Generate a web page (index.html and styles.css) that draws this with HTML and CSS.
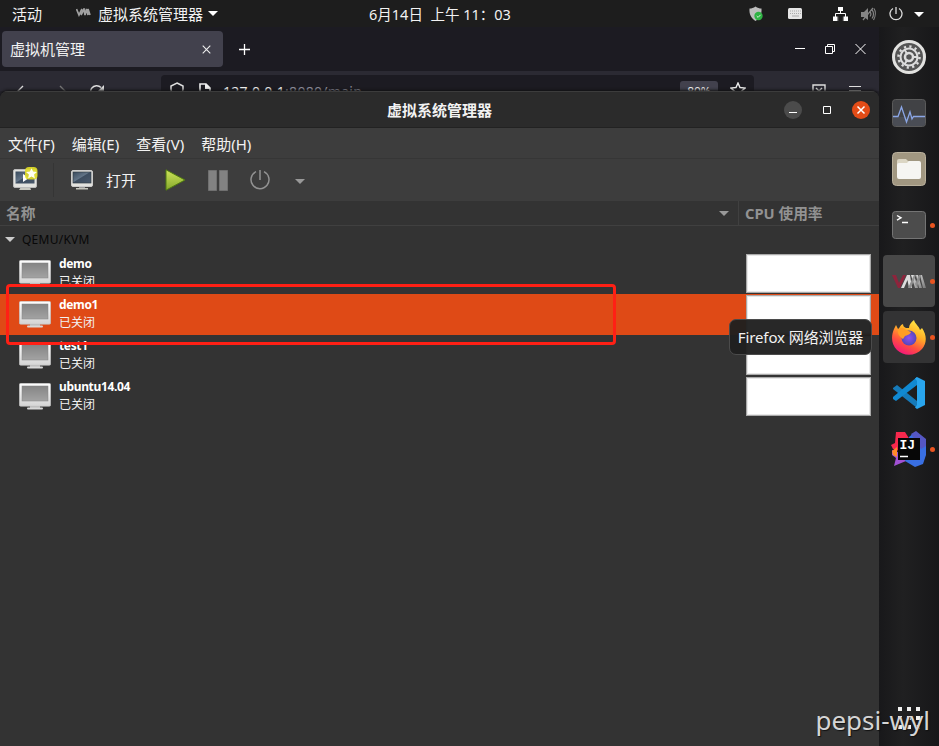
FILE: index.html
```html
<!DOCTYPE html>
<html lang="zh-CN">
<head>
<meta charset="utf-8">
<title>虚拟系统管理器</title>
<link rel="stylesheet" href="styles.css">
</head>
<body>
<svg class="defs" width="0" height="0" aria-hidden="true">
  <defs>
    <linearGradient id="frame" x2="0" y2="1"><stop stop-color="#fff"/><stop offset="1" stop-color="#d4d4d4"/></linearGradient>
    <linearGradient id="glass" x2="0" y2="1"><stop stop-color="#858585"/><stop offset="1" stop-color="#a3a3a3"/></linearGradient>
    <linearGradient id="blueglass" x2="1" y2="1"><stop stop-color="#38495b"/><stop offset=".45" stop-color="#627487"/><stop offset=".5" stop-color="#3d4d60"/><stop offset="1" stop-color="#4a596b"/></linearGradient>
    <linearGradient id="green" x2="0" y2="1"><stop stop-color="#cde35a"/><stop offset="1" stop-color="#86a92c"/></linearGradient>
    <linearGradient id="fire" x1=".8" y1="0" x2=".3" y2="1"><stop stop-color="#fff14a"/><stop offset=".4" stop-color="#ffad26"/><stop offset=".7" stop-color="#ff503f"/><stop offset="1" stop-color="#f3137e"/></linearGradient>
    <radialGradient id="globe"><stop stop-color="#8c50f2"/><stop offset="1" stop-color="#5547b8"/></radialGradient>
    <linearGradient id="metal" x2="1" y2="1"><stop stop-color="#e6e6e6"/><stop offset="1" stop-color="#777"/></linearGradient>
    <symbol id="monitor" viewBox="0 0 32 27">
      <path d="M11 23h10v2H11z" fill="#bbb"/><rect x="8" y="24.600" width="16" height="2" rx="1" fill="#d8d8d8"/>
      <rect x=".3" y=".3" width="31.400" height="23" rx="1.500" fill="url(#frame)" stroke="#bcbcbc" stroke-width=".6"/>
      <rect x="3" y="3" width="26" height="15" fill="url(#glass)" stroke="#858585" stroke-width=".5"/>
    </symbol>
    <symbol id="vm" viewBox="0 0 36 15">
      <path d="M1 1h4l3 8 4-8h3L9 14H7z" fill="#8e243c"/>
      <path d="M10 14L16 1h3l2 13h-3l-1.500-8L13 14z" fill="#ddd"/>
      <path d="M20 1h3l4 13h-3zM25 1h2l4 13h-3zM29 1h2l4 13h-3z" fill="url(#metal)"/>
      <path d="M17 14L23 1h2l-5 13zM24 10l4-9h2l-4 12z" fill="#8f8f8f"/>
    </symbol>
  </defs>
</svg>
<div class="desktop">
  <header class="topbar">
    <span class="activities">活动</span>
    <svg class="vmmini" width="15" height="9" viewBox="0 0 15 9"><path d="M.5 1l2.500 6 3-6M5 7l3-6 1 6 1.500-6L12 7V1l2 6" fill="none" stroke="#a0a0a0" stroke-width="1.700"/></svg>
    <span class="appname">虚拟系统管理器</span>
    <i class="caret white"></i>
    <span class="clock">6月14日&nbsp; 上午 11<span class="colon">：</span>03</span>
    <span class="tray">
      <svg width="15" height="16" viewBox="0 0 15 16"><path d="M6.500.5C8.500 2 10.500 2.500 12.500 2.500c.5 6-2 10-6 12.500C2.500 12.500 0 8.500.5 2.500 2.500 2.500 4.500 2 6.500.5z" fill="#bdbdbd"/><circle cx="9.500" cy="10" r="4.200" fill="#2fb344"/><path d="M7.700 10l1.400 1.400 2.500-2.600" stroke="#d6f5db" fill="none"/></svg>
      <svg width="15" height="11" viewBox="0 0 15 11"><rect width="14" height="11" rx="1.500" fill="#e6e6e6"/><path d="M2 3h11M2 5.500h11" stroke="#aaa" stroke-dasharray="1 1"/><path d="M4 8h7" stroke="#aaa"/></svg>
      <svg width="15" height="14" viewBox="0 0 15 14"><path d="M5 0h5v4H5zM0 9.500h4.500V14H0zM5.300 9.500h4.500V14H5.300zM10.500 9.500H15V14h-4.500z" fill="#fff"/><path d="M7.500 3v4M2.500 10V6.500h10V10" fill="none" stroke="#fff"/><path d="M5.200 9h4.700v5H5.200z" fill="#1d1d1d"/></svg>
      <svg width="15" height="14" viewBox="0 0 15 14"><path d="M0 5h3l4-4v12L3 10H0z" fill="#858585"/><path d="M9 5c1 1 1 3 0 4.500M11 3c2 2 2 6 0 8.500M13 1.500c2 3 1.500 8-.5 11.500M2 13L12 1" fill="none" stroke="#858585" stroke-width="1.200"/></svg>
      <svg width="14" height="14" viewBox="0 0 14 14"><path d="M4 1.500a6 6 0 1 0 6 0M7 0v7" fill="none" stroke="#ddd" stroke-width="1.300"/></svg>
      <i class="caret white"></i>
    </span>
  </header>
  <div class="workspace">
    <main class="windows">
      <section class="browser">
        <div class="tabs">
          <div class="tab"><span>虚拟机管理</span><svg width="9" height="9" viewBox="0 0 9 9"><path d="M.7.7l7.600 7.600M8.300.7L.7 8.300" stroke="#eee" stroke-width="1.100"/></svg></div>
          <svg class="plus" width="13" height="13" viewBox="0 0 13 13"><path d="M6.500 1v11M1 6.500h11" stroke="#fff" stroke-width="1.300"/></svg>
          <div class="wctl">
            <svg width="10" height="10" viewBox="0 0 10 10"><path d="M0 4.500h10" stroke="#fff"/></svg>
            <svg width="10" height="10" viewBox="0 0 10 10"><path d="M.5 2.500h7v7h-7zM2.500 2.500v-2h7v7h-2" fill="none" stroke="#fff"/></svg>
            <svg width="11" height="10" viewBox="0 0 11 10"><path d="M.5 0l10 10M10.500 0l-10 10" stroke="#fff"/></svg>
          </div>
        </div>
        <div class="navbar">
          <div class="navicons">
            <svg width="16" height="16" viewBox="0 0 16 16"><path d="M9 2L3 8l6 6M3 8h12" fill="none" stroke="#ddd" stroke-width="1.400"/></svg>
            <svg width="16" height="16" viewBox="0 0 16 16"><path d="M8 2l6 6-6 6M14 8H2" fill="none" stroke="#777" stroke-width="1.400"/></svg>
            <svg width="16" height="16" viewBox="0 0 16 16"><path d="M12.500 9A6 6 0 1 1 11 3.500" fill="none" stroke="#ddd" stroke-width="1.500"/><path d="M14 1v6H8z" fill="#ddd"/></svg>
          </div>
          <div class="urlbar">
            <svg width="14" height="16" viewBox="0 0 14 16"><path d="M7 1l6 3V7c0 4-3 6-6 8-3-2-6-4-6-8V4z" fill="none" stroke="#ddd" stroke-width="1.500"/></svg>
            <svg class="page" width="12" height="15" viewBox="0 0 12 15"><path d="M1 1h6l4 4v9H1z" fill="none" stroke="#eee" stroke-width="1.600"/><path d="M6 1h1l4 4v1H6z" fill="#eee"/></svg>
            <span class="url">127.0.0.1<b>:8080/main</b></span>
            <span class="pct">80%</span>
            <svg class="fav" width="16" height="16" viewBox="0 0 16 16"><path d="M8 1l2 4.500 5 .6-3.700 3.300 1 5L8 12l-4.300 2.400 1-5L1 6.100l5-.6z" fill="none" stroke="#eee" stroke-width="1.400"/></svg>
          </div>
          <svg class="pocket" width="14" height="14" viewBox="0 0 14 14"><path d="M1 1h12v6c0 4-3 6-6 6s-6-2-6-6zM4 4l3 3 3-3" fill="none" stroke="#ddd" stroke-width="1.400"/></svg>
          <svg class="burger" width="12" height="12" viewBox="0 0 12 12"><path d="M0 1.500h12M0 5.500h12M0 9.500h12" stroke="#ddd" stroke-width="1.200"/></svg>
        </div>
      </section>
      <section class="manager">
        <div class="titlebar">
          <h1>虚拟系统管理器</h1>
          <div class="buttons">
            <svg width="18" height="18" viewBox="0 0 18 18"><circle cx="9" cy="9" r="9" fill="#4b4b4b"/><path d="M5 11.500h8" stroke="#fff"/></svg>
            <svg width="18" height="18" viewBox="0 0 18 18"><path d="M5.500 5.500h7v7h-7z" fill="none" stroke="#fff"/></svg>
            <svg width="18" height="18" viewBox="0 0 18 18"><circle cx="9" cy="9" r="9" fill="#e34c17"/><path d="M5.500 5.500l7 7M12.500 5.500l-7 7" stroke="#fff" stroke-width="1.500"/></svg>
          </div>
        </div>
        <nav class="menubar"><span>文件(F)</span><span>编辑(E)</span><span>查看(V)</span><span>帮助(H)</span></nav>
        <div class="toolbar">
          <div class="new"><svg width="26" height="24" viewBox="0 0 26 24"><path d="M8 20h9l1 3H6z" fill="#c8c8c0"/><rect x=".5" y="2.500" width="23" height="18" rx="1.500" fill="#e3e3df" stroke="#bbb"/><rect x="2.500" y="4.500" width="19" height="12" fill="url(#blueglass)"/><path d="M10 7v8l6-4z" fill="#fff"/><rect x="12" y="0" width="12.500" height="12.500" rx="4" fill="#dfdc28" opacity=".92"/><path d="M18.500 1.200l1.600 3.400 3.800.4-2.800 2.600.8 3.800-3.400-1.900-3.400 1.900.8-3.800L13 5l3.900-.4z" fill="#fffff0"/></svg></div>
          <div class="open"><svg width="22" height="20" viewBox="0 0 22 20"><path d="M8 16h6v2H8z" fill="#999"/><path d="M5 18h12v1.500H5z" fill="#c5c5bd"/><rect x=".5" y=".5" width="21" height="16" rx="1.500" fill="#e3e3df" stroke="#ccc"/><rect x="2" y="2" width="18" height="11" fill="url(#blueglass)" stroke="#333c45" stroke-width=".7"/></svg><span>打开</span></div>
          <svg class="play" width="21" height="22" viewBox="0 0 21 22"><path d="M1 .8L20 11 1 21.200z" fill="url(#green)" stroke="#4e7a10"/></svg>
          <svg class="pause" width="20" height="21" viewBox="0 0 20 21"><path d="M.5.5h8v20h-8zM11.500.5h8v20h-8z" fill="#828282" stroke="#707070"/></svg>
          <svg class="power" width="20" height="20" viewBox="0 0 20 20"><path d="M6 1.600a9 9 0 1 0 8 0M10 0v10" fill="none" stroke="#929292" stroke-width="1.500"/></svg>
          <i class="caret gray"></i>
        </div>
        <div class="listhead"><div class="hname"><span>名称</span><i class="caret gray"></i></div><div class="hcpu">CPU 使用率</div></div>
        <div class="list">
          <div class="conn"><i class="caret light"></i><span>QEMU/KVM</span></div>
          <div class="row"><svg class="mon"><use href="#monitor"/></svg><div class="info"><strong>demo</strong><span>已关闭</span></div><div class="graph"></div></div>
          <div class="row selected"><svg class="mon"><use href="#monitor"/></svg><div class="info"><strong>demo1</strong><span>已关闭</span></div><div class="graph"></div></div>
          <div class="row"><svg class="mon"><use href="#monitor"/></svg><div class="info"><strong>test1</strong><span>已关闭</span></div><div class="graph"></div></div>
          <div class="row"><svg class="mon"><use href="#monitor"/></svg><div class="info"><strong>ubuntu14.04</strong><span>已关闭</span></div><div class="graph"></div></div>
          <div class="highlight"></div>
        </div>
      </section>
    </main>
    <aside class="dock">
      <div class="slot"><svg width="34" height="34" viewBox="0 0 34 34"><circle cx="17" cy="17" r="15.500" fill="#555" stroke="#e2e2e0" stroke-width="3"/><circle cx="17" cy="17" r="10.500" fill="none" stroke="#ddd" stroke-width="2.500" stroke-dasharray="2.200 3.300"/><circle cx="17" cy="17" r="8.500" fill="none" stroke="#ddd" stroke-width="2"/><circle cx="17" cy="17" r="4" fill="none" stroke="#ddd" stroke-width="2.500"/><path d="M20 17h6M15.500 14.500L12.500 9.500M15.500 19.500l-3 5" stroke="#ddd" stroke-width="2"/></svg></div>
      <div class="slot"><svg width="34" height="28" viewBox="0 0 34 28"><rect x=".5" y=".5" width="33" height="27" rx="3" fill="#414245" stroke="#5a5a5a"/><path d="M1 18h32v6a3 3 0 0 1-3 3H4a3 3 0 0 1-3-3z" fill="#4a4d55"/><path d="M1 17.500h5L9.500 8l5 15L18 13l2 7 1.500-2.500H33" fill="none" stroke="#8ba6e6" stroke-width="1.300"/></svg></div>
      <div class="slot"><svg width="34" height="34" viewBox="0 0 34 34"><rect x=".5" y=".5" width="33" height="33" rx="4" fill="#a19781" stroke="#b9b09c"/><path d="M5 9q0-2 2-2h7l2 2h10q2 0 2 2v5H5z" fill="#dcd6c4"/><path d="M5 13q0-2 2-2h8l2-2h10q2 0 2 2v14q0 2-2 2H7q-2 0-2-2z" fill="#f6f5f2"/></svg></div>
      <div class="slot run"><svg width="34" height="28" viewBox="0 0 34 28"><rect x=".5" y=".5" width="33" height="27" rx="3" fill="#4c4c4c" stroke="#747474"/><path d="M5 4.500l4 2.300-4 2.300M10 11.500h6" fill="none" stroke="#fff" stroke-width="1.400"/></svg></div>
      <div class="slot run active"><svg width="36" height="15"><use href="#vm"/></svg></div>
      <div class="slot run hover"><svg width="34" height="35" viewBox="0 0 34 35"><path d="M22 0c1 4 5 6 6 10l2-2c5 7 5 15 0 21-6 7-18 8-25 1C-1 24-1 16 2 9l2-4 2 4c2-1 2-4 5-5 0 2 1 3 3 4h3c0-3 2-6 5-8z" fill="url(#fire)"/><circle cx="17" cy="18" r="7.500" fill="url(#globe)"/><path d="M6 10c3-3 6-2 8 0l5 2c-1 3-4 3-6 4l-2 3c-3-2-6-5-5-9z" fill="#ff9d25"/></svg>
        <div class="tooltip">Firefox 网络浏览器</div></div>
      <div class="slot"><svg width="32" height="32" viewBox="0 0 32 32"><path d="M0 11l4-3 20 16v7L0 12z" fill="#167ab9"/><path d="M0 20v2l3 2L24 8V0z" fill="#1089d2"/><path d="M24 0l8 4v24l-8 4-2-1.500 2-2.500V4l-2-2.500z" fill="#29a5ed"/></svg></div>
      <div class="slot run"><svg width="36" height="36" viewBox="0 0 36 36"><path d="M5 1h9l5 8-4 13-13-4L0 14l4-2z" fill="#f7284d"/><path d="M1 19l8 3 6 8-12 5 2-8-4-3z" fill="#a151d4"/><path d="M1 20l5-4v10l-4-2z" fill="#ff8b27"/><path d="M18 6l6-5 11 8v15l-3 9-8 3-10-6z" fill="#396fe2"/><path d="M20 3l5-3 10 8v7l-5 3z" fill="#5557c4"/><rect x="7" y="7" width="22" height="22" fill="#070707"/><text x="8.500" y="18" class="ij">IJ</text><path d="M9 25.500h8" stroke="#fff" stroke-width="1.500"/></svg></div>
      <div class="apps"><svg width="24" height="24" viewBox="0 0 24 24"><path d="M1 1h4v4H1zM10 1h4v4h-4zM19 1h4v4h-4zM1 10h4v4H1zM10 10h4v4h-4zM19 10h4v4h-4zM1 19h4v4H1zM10 19h4v4h-4zM19 19h4v4h-4z" fill="#f2f2f2"/></svg><span class="watermark">pepsi-wyl</span></div>
    </aside>
  </div>
</div>
</body>
</html>
```
FILE: styles.css
```css
* { box-sizing: border-box; }
body { margin: 0; background: #1c1c1c; color: #f2f2f2; font: 15px/20px "Noto Sans", "Noto Sans CJK SC", sans-serif; }
svg { display: block; flex: none; }
.defs { position: absolute; }
.desktop { width: 939px; height: 746px; overflow: hidden; display: flex; flex-direction: column; }
.caret { flex: none; width: 0; height: 0; border: 5px solid transparent; border-top-color: #fff; border-bottom: 0; }
.caret.gray { border-top-color: #999; }
.caret.light { border-top-color: #ccc; }

.topbar { height: 27px; flex: none; display: flex; align-items: center; background: #1d1d1d; padding: 0 15px 0 12px; white-space: pre; }
.topbar .caret { margin-left: 5px; }
.vmmini { margin: -2px 7px 0 34px; }
.clock { margin-left: 151px; font-size: 14.5px; }
.colon { font-family: "Noto Sans CJK TC", sans-serif; line-height: 1; }
.tray { margin-left: auto; display: flex; align-items: center; }
.tray svg { margin-right: -1px; position: relative; left: 0; }
.tray svg:nth-child(2) { margin-left: 25px; }
.tray svg:nth-child(3) { margin-left: 31px; }
.tray svg:nth-child(4) { margin-left: 14px; }
.tray svg:nth-child(5) { margin-left: 14px; }
.tray .caret { margin: 1px 0 0 12px; }

.workspace { flex: 1; display: flex; min-height: 0; }
.windows { width: 879px; display: flex; flex-direction: column; background: #24232b; }

.browser { height: 64px; flex: none; overflow: hidden; background: #2b2a33; }
.tabs { height: 44px; background: #1c1b22; display: flex; align-items: center; padding: 0 13px 0 2px; }
.tab { width: 221px; height: 36px; border-radius: 4px; background: #42414d; display: flex; align-items: center; justify-content: space-between; padding: 0 12px 0 8px; }
.plus { margin-left: 15px; }
.wctl { margin-left: auto; display: flex; gap: 20px; }
.navbar { display: flex; padding-top: 4px; height: 44px; }
.navicons { display: flex; gap: 22px; width: 161px; padding: 9px 0 0 14px; }
.urlbar { width: 593px; height: 32px; border-radius: 4px; background: #1c1b22; display: flex; align-items: flex-start; padding: 7px 8px 0 9px; }
.page { margin: 1px 0 0 15px; }
.url { margin-left: 12px; font-size: 14px; letter-spacing: .3px; }
.url b { font-weight: 400; color: #8f8f9d; }
.pct { margin: -1px 12px 0 auto; width: 38px; height: 20px; border-radius: 3px; background: #42414d; text-align: center; font-size: 12px; line-height: 21px; }
.pocket { margin: 9px 0 0 58px; }
.burger { margin: 10px 0 0 23px; }

.manager { flex: 1; display: flex; flex-direction: column; background: #333; border-radius: 8px 8px 0 0; box-shadow: 0 -1px 3px #111; overflow: hidden; }
.titlebar { height: 37px; flex: none; background: #2b2b2b; border-top: 1px solid #3c3c3c; border-bottom: 1px solid #222; display: grid; grid-template-columns: 1fr auto 1fr; align-items: center; }
.titlebar h1 { grid-column: 2; margin: 1px 0 0; font-size: 15px; line-height: 20px; }
.buttons { justify-self: end; display: flex; gap: 16px; padding-right: 9px; }
.menubar { height: 31px; flex: none; background: #3d3d3d; border-bottom: 1px solid #363636; display: flex; gap: 17px; align-items: center; padding: 1px 8px 0; font-size: 15px; }
.toolbar { height: 42px; flex: none; background: #3d3d3d; display: flex; align-items: center; }
.new { width: 54px; height: 34px; padding: 4px 0 0 13px; border-right: 1px solid #353535; }
.open { display: flex; align-items: center; margin-left: 17px; }
.open span { margin: 0 0 0 13px; }
.play { margin-left: 29px; }
.pause { margin-left: 22px; }
.power { margin-left: 22px; margin-top: -1px; }
.toolbar .caret { margin-left: 25px; margin-top: 2px; }
.listhead { height: 25px; flex: none; border-bottom: 1px solid #404040; display: flex; font-weight: 700; color: #929292; line-height: 25px; font-size: 14.7px; }
.hname { width: 739px; border-right: 1px solid #404040; padding: 0 9px 0 6px; display: flex; align-items: center; justify-content: space-between; }
.hcpu { padding-left: 6px; }
.list { position: relative; flex: 1; }
.conn { height: 27px; display: flex; align-items: center; gap: 7px; padding-left: 5px; font-size: 12px; letter-spacing: .25px; color: #080808; }
.row { height: 41px; display: flex; align-items: center; padding: 0 8px 0 19px; }
.selected { background: #df4a16; }
.mon { width: 32px; height: 27px; }
.info { margin-left: 8px; display: flex; flex-direction: column; font-size: 12px; line-height: 18px; }
.info strong { line-height: 15px; padding-bottom: 2px; color: #fff; letter-spacing: -.35px; }
.graph { margin-left: auto; width: 125px; height: 39px; background: #fff; border: 1px solid #aaa; box-shadow: inset 0 0 0 1px #e8e8e8; }
.highlight { position: absolute; left: 6px; top: 58px; width: 610px; height: 61px; border: 3px solid #ff2015; border-radius: 4px; }

.dock { width: 60px; display: flex; flex-direction: column; align-items: center; padding: 4px 0 16px; gap: 4px; background: linear-gradient(90deg, #18181a, #202021 40%, #171719); }
.slot { position: relative; width: 52px; height: 52px; flex: none; border-radius: 4px; display: flex; align-items: center; justify-content: center; }
.active { background: #484848; }
.hover { background: #333334; }
.run::after { content: ""; position: absolute; right: 0; top: 23.5px; width: 5px; height: 5px; border-radius: 50%; background: #e95420; }
.tooltip { position: absolute; right: 63px; top: 8px; width: 143px; height: 36px; border: 1px solid #4b4b4b; border-radius: 7px; background: rgba(31, 31, 31, .96); text-align: center; line-height: 35px; white-space: nowrap; font-size: 15px; letter-spacing: -.1px; z-index: 2; }
.ij { font: bold 13px "Liberation Mono", monospace; fill: #fff; }
.apps { position: relative; margin-top: auto; }
.watermark { position: absolute; right: -9px; top: -1px; font-size: 26px; line-height: 30px; white-space: nowrap; color: #d5d5d5; text-shadow: 1px 1px 1px #111; }
```
